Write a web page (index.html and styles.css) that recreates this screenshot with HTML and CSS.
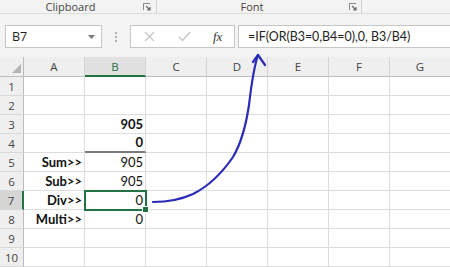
FILE: index.html
```html
<!DOCTYPE html>
<html>
<head>
<meta charset="utf-8">
<link rel="stylesheet" href="styles.css">
</head>
<body>
<div class="app">
  <div class="ribbon">
    <div class="group g1">
      <span class="glabel">Clipboard</span>
      <svg class="launcher" width="8" height="8" viewBox="0 0 8 8"><path d="M0.5 7 V0.5 H7" fill="none" stroke="#8a8a8a" stroke-width="1"/><path d="M3 3 L7 7 M4 7 H7 V4" fill="none" stroke="#6a6a6a" stroke-width="1.2"/></svg>
    </div>
    <div class="group g2">
      <span class="glabel">Font</span>
      <svg class="launcher" width="8" height="8" viewBox="0 0 8 8"><path d="M0.5 7 V0.5 H7" fill="none" stroke="#8a8a8a" stroke-width="1"/><path d="M3 3 L7 7 M4 7 H7 V4" fill="none" stroke="#6a6a6a" stroke-width="1.2"/></svg>
    </div>
  </div>
  <div class="fbar">
    <div class="namebox">
      <span class="nametext">B7</span>
      <svg class="dd" width="7" height="4" viewBox="0 0 7 4"><path d="M0 0 H7 L3.5 4 Z" fill="#777"/></svg>
    </div>
    <div class="dots"><i></i><i></i><i></i></div>
    <div class="fxbox">
      <svg width="11" height="11" viewBox="0 0 11 11"><path d="M1 1 L10 10 M10 1 L1 10" stroke="#c4c4c4" stroke-width="1.2"/></svg>
      <svg width="13" height="11" viewBox="0 0 13 11"><path d="M1 6 L4.5 9.5 L12 1" fill="none" stroke="#c4c4c4" stroke-width="1.3"/></svg>
      <span class="fx">fx</span>
    </div>
    <div class="formula">=IF(OR(B3=0,B4=0),0, B3/B4)</div>
  </div>
  <div class="sheet">
    <div class="hd corner"><svg width="9" height="9" viewBox="0 0 9 9"><path d="M9 0 V9 H0 Z" fill="#b5b5b5"/></svg></div>
    <div class="hd col">A</div><div class="hd col selc">B</div><div class="hd col">C</div><div class="hd col">D</div><div class="hd col">E</div><div class="hd col">F</div><div class="hd col">G</div>

    <div class="hd row">1</div><div class="c"></div><div class="c"></div><div class="c"></div><div class="c"></div><div class="c"></div><div class="c"></div><div class="c"></div>
    <div class="hd row">2</div><div class="c"></div><div class="c"></div><div class="c"></div><div class="c"></div><div class="c"></div><div class="c"></div><div class="c"></div>
    <div class="hd row">3</div><div class="c"></div><div class="c b">905</div><div class="c"></div><div class="c"></div><div class="c"></div><div class="c"></div><div class="c"></div>
    <div class="hd row">4</div><div class="c"></div><div class="c b under">0</div><div class="c"></div><div class="c"></div><div class="c"></div><div class="c"></div><div class="c"></div>
    <div class="hd row">5</div><div class="c b">Sum&gt;&gt;</div><div class="c">905</div><div class="c"></div><div class="c"></div><div class="c"></div><div class="c"></div><div class="c"></div>
    <div class="hd row">6</div><div class="c b">Sub&gt;&gt;</div><div class="c">905</div><div class="c"></div><div class="c"></div><div class="c"></div><div class="c"></div><div class="c"></div>
    <div class="hd row selr">7</div><div class="c b">Div&gt;&gt;</div><div class="c sel">0</div><div class="c"></div><div class="c"></div><div class="c"></div><div class="c"></div><div class="c"></div>
    <div class="hd row">8</div><div class="c b">Multi&gt;&gt;</div><div class="c">0</div><div class="c"></div><div class="c"></div><div class="c"></div><div class="c"></div><div class="c"></div>
    <div class="hd row">9</div><div class="c"></div><div class="c"></div><div class="c"></div><div class="c"></div><div class="c"></div><div class="c"></div><div class="c"></div>
    <div class="hd row">10</div><div class="c"></div><div class="c"></div><div class="c"></div><div class="c"></div><div class="c"></div><div class="c"></div><div class="c"></div>
  </div>
  <svg class="arrow" width="450" height="267" viewBox="0 0 450 267">
    <path d="M153,202 C165,202 180,200 193,194 C207,187 222,173 233,157 C242,142 246,125 249,105 C251,88 253,70 258,55" fill="none" stroke="#2a2ab8" stroke-width="2.2" stroke-linecap="round"/>
    <path d="M253,62 L258,55 L265,65" fill="none" stroke="#2a2ab8" stroke-width="2.2" stroke-linecap="round" stroke-linejoin="round"/>
  </svg>
</div>
</body>
</html>
```

FILE: styles.css
```css
html, body {
  margin: 0;
  padding: 0;
  background: #ffffff;
}
.app {
  position: relative;
  width: 450px;
  height: 267px;
  overflow: hidden;
  font-family: "Open Sans", "Noto Sans", sans-serif;
}
.ribbon {
  display: flex;
  height: 14px;
  background: #f3f3f3;
  border-bottom: 1px solid #dcdcdc;
  box-sizing: border-box;
}
.group {
  display: flex;
  align-items: center;
  border-right: 1px solid #d2d2d2;
  box-sizing: border-box;
  height: 13px;
}
.g1 { width: 157px; padding-right: 5px; }
.g2 { width: 205px; padding-right: 4px; }
.glabel {
  flex: 1;
  text-align: center;
  font-size: 11px;
  color: #444;
  line-height: 13px;
}
.launcher { margin-left: 2px; margin-top: 1px; }
.fbar {
  display: flex;
  align-items: flex-start;
  height: 43px;
  background: #f3f3f3;
  padding-top: 11px;
  padding-left: 5px;
  box-sizing: border-box;
}
.namebox {
  width: 97px;
  height: 23px;
  box-sizing: border-box;
  background: #fff;
  border: 1px solid #c6c6c6;
  display: flex;
  align-items: center;
  padding: 0 6px 0 6px;
}
.nametext {
  flex: 1;
  font-size: 12.5px;
  color: #222;
}
.dots {
  width: 28px;
  height: 23px;
  display: flex;
  flex-direction: column;
  align-items: center;
  justify-content: center;
  gap: 2px;
}
.dots i {
  display: block;
  width: 2px;
  height: 2px;
  background: #b0b0b0;
}
.fxbox {
  width: 105px;
  height: 23px;
  box-sizing: border-box;
  background: #fff;
  border: 1px solid #c6c6c6;
  display: flex;
  align-items: center;
  padding-left: 13px;
  gap: 23px;
}
.fx {
  font-family: "Liberation Serif", serif;
  font-style: italic;
  font-size: 13px;
  color: #333;
  margin-left: -1px;
}
.formula {
  margin-left: 3px;
  flex: 1;
  height: 23px;
  box-sizing: border-box;
  background: #fff;
  border: 1px solid #c6c6c6;
  border-right: none;
  font-family: Lato, "Open Sans", sans-serif;
  font-size: 12.4px;
  color: #222;
  line-height: 21px;
  padding-left: 9px;
  white-space: nowrap;
}
.sheet {
  display: grid;
  grid-template-columns: 24px repeat(7, 61px);
  grid-template-rows: 20px repeat(10, 19px);
}
.hd {
  background: #efefef;
  box-sizing: border-box;
  color: #444;
  font-family: "Open Sans", "Noto Sans", sans-serif;
  font-size: 11.5px;
  display: flex;
  align-items: center;
  justify-content: center;
}
.corner {
  border-right: 1px solid #bdbdbd;
  border-bottom: 1px solid #bdbdbd;
  align-items: flex-end;
  justify-content: flex-end;
  padding: 0 2px 3px 0;
}
.col {
  border-right: 1px solid #d4d4d4;
  border-bottom: 1px solid #bdbdbd;
}
.row {
  border-right: 1px solid #bdbdbd;
  border-bottom: 1px solid #d8d8d8;
}
.selc {
  background: #e1e1e1;
  color: #217346;
  border-bottom: 2px solid #217346;
}
.selr {
  background: #d6d6d6;
  color: #444;
  border-right: 2px solid #217346;
}
.c {
  box-sizing: border-box;
  border-right: 1px solid #dcdcdc;
  border-bottom: 1px solid #dcdcdc;
  display: flex;
  align-items: flex-end;
  justify-content: flex-end;
  padding: 0 2px 1px 0;
  font-family: Lato, "Liberation Sans", sans-serif;
  font-size: 13px;
  line-height: 16px;
  color: #111;
}
.b { font-weight: bold; }
.under { border-bottom: 2px solid #7a7a7a; }
.sel {
  position: relative;
  outline: 2px solid #217346;
  outline-offset: -1px;
  z-index: 2;
}
.sel::after {
  content: "";
  position: absolute;
  right: -4px;
  bottom: -4px;
  width: 5px;
  height: 5px;
  background: #217346;
  border: 1px solid #fff;
}
.arrow {
  position: absolute;
  left: 0;
  top: 0;
  pointer-events: none;
  z-index: 5;
}
```
